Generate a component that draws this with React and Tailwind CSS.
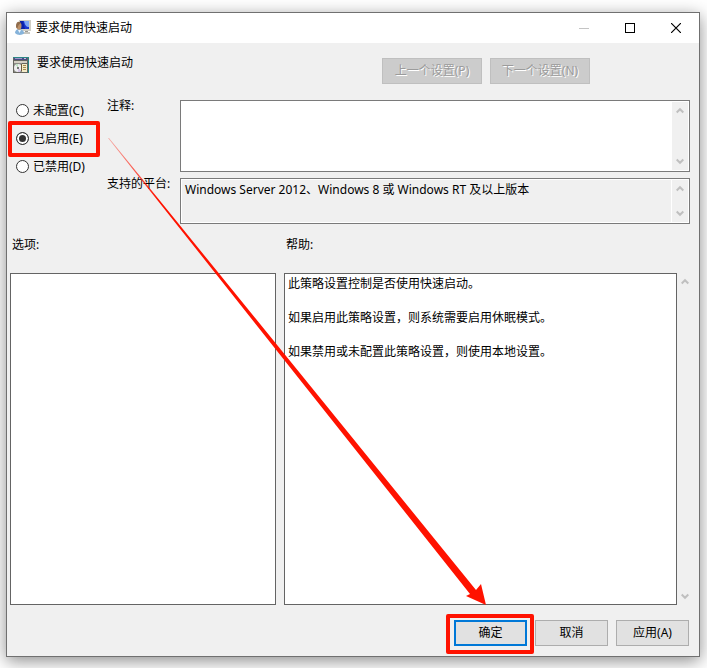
import React from "react";

const helpText = `此策略设置控制是否使用快速启动。

如果启用此策略设置，则系统需要启用休眠模式。

如果禁用或未配置此策略设置，则使用本地设置。`;

const states = [
  { id: "state-none", label: "未配置(C)" },
  { id: "state-on", label: "已启用(E)", marked: true },
  { id: "state-off", label: "已禁用(D)" },
];

function UserMonitorIcon() {
  return (
    <svg className="size-4 shrink-0" viewBox="0 0 16 16" aria-hidden="true">
      <rect x="4" y="0" width="12" height="11" fill="#cfcdc4" />
      <rect x="5" y="1" width="9" height="8" fill="#1a36cf" />
      <path d="M9 1h5v6c-3 0-4-2-5-6z" fill="#7ea6f4" />
      <path d="M5 1h3l2 8H5z" fill="#0a1fa8" />
      <rect x="10" y="11" width="3" height="1" fill="#9a9a94" />
      <rect x="8" y="12" width="7" height="2" fill="#c6c6c0" />
      <path d="M0 13c0-2 1.500-4 4-4s5 1.500 5 4.500c-2 2-7 2-9-.5z" fill="#86b3da" />
      <path d="M3 10l1.500 3L6 10z" fill="#eef5fb" />
      <ellipse cx="4" cy="6" rx="2.500" ry="3.700" fill="#bd9168" />
      <path d="M1 6c0-3 1.500-4.500 3-4.300 1.200.3 1.800 1 1.500 1.800C4 4 3 6 2.300 8.500 1.500 8.500 1 7.500 1 6z" fill="#8f6c4c" />
    </svg>
  );
}

function PolicyIcon() {
  return (
    <svg className="size-4 shrink-0" viewBox="0 0 16 16" shapeRendering="crispEdges" aria-hidden="true">
      <rect width="16" height="16" fill="#2b8585" />
      <rect x="0" y="1" width="15" height="15" fill="#66665f" />
      <rect x="1" y="1" width="13" height="2" fill="#4b4b86" />
      <rect x="2" y="1" width="7" height="1" fill="#9a9ac8" />
      <rect x="11" y="1" width="2" height="1" fill="#c9c9d8" />
      <rect x="1" y="4" width="13" height="2" fill="#d4d0c4" />
      <rect x="1" y="6" width="8" height="9" fill="#8c8c88" />
      <circle cx="5" cy="11" r="4" fill="#ededed" shapeRendering="auto" />
      <path d="M5 11L2 8a4 4 0 0 1 3-1z" fill="#bfe3c2" />
      <path d="M5 11l3 3a4 4 0 0 1-3 1z" fill="#d5c4e8" />
      <rect x="4" y="10" width="2" height="2" fill="#777777" />
      <rect x="9" y="7" width="5" height="8" fill="#f3ebc8" />
      <rect x="8" y="7" width="1" height="7" fill="#6e5c36" />
      <rect x="10" y="8" width="3" height="1" fill="#a68b4e" />
      <rect x="10" y="10" width="3" height="1" fill="#a68b4e" />
      <rect x="10" y="12" width="3" height="1" fill="#a68b4e" />
      <rect x="15" y="6" width="1" height="10" fill="#2b8585" />
    </svg>
  );
}

function Chevron({ down }) {
  return (
    <svg className="h-[7px] w-2" viewBox="0 0 8 7" fill="none" stroke="#bfbfbf" strokeWidth="2" aria-hidden="true">
      <path d={down ? "M0.700 1.500L4 4.800L7.300 1.500" : "M0.700 5.500L4 2.200L7.300 5.500"} />
    </svg>
  );
}

function ScrollBar() {
  return (
    <div className="flex w-4 shrink-0 flex-col justify-between bg-[#f0f0f0]">
      <button type="button" aria-label="向上滚动" className="flex h-[17px] items-center justify-center">
        <Chevron />
      </button>
      <button type="button" aria-label="向下滚动" className="flex h-[17px] items-center justify-center">
        <Chevron down />
      </button>
    </div>
  );
}

function RedFrame({ className }) {
  return <span className={`pointer-events-none absolute rounded-[2px] border-4 border-[#ff1200] ${className}`} />;
}

export default function App() {
  return (
    <div className="flex min-h-screen flex-col bg-white pt-3 pr-[7px] pb-[11px] pl-1.5 font-['Noto_Sans','Noto_Sans_CJK_SC',sans-serif] text-[12px] leading-4 text-black">
      <main className="relative flex flex-1 flex-col border border-[#707070] bg-[#f0f0f0] shadow-[0_4px_16px_rgba(0,0,0,0.45)]">
        <header className="flex h-[30px] items-center bg-white pl-2">
          <UserMonitorIcon />
          <h1 className="ml-[5px] flex-1">要求使用快速启动</h1>
          <button type="button" disabled aria-label="最小化" className="flex h-full w-[46px] items-center justify-center">
            <svg className="size-[10px]" viewBox="0 0 10 10" aria-hidden="true">
              <path d="M0 5.500H10" stroke="#c4c4c4" />
            </svg>
          </button>
          <button type="button" aria-label="最大化" className="flex h-full w-[46px] items-center justify-center">
            <svg className="size-[10px]" viewBox="0 0 10 10" fill="none" aria-hidden="true">
              <rect x="0.500" y="0.500" width="9" height="9" stroke="#000" />
            </svg>
          </button>
          <button type="button" aria-label="关闭" className="flex h-full w-[46px] items-center justify-center">
            <svg className="size-[10px]" viewBox="0 0 10 10" fill="none" aria-hidden="true">
              <path d="M0 0L10 10M10 0L0 10" stroke="#000" strokeWidth="1.200" />
            </svg>
          </button>
        </header>

        <div className="flex h-[54px] items-start pt-[14px] pr-[109px] pl-1.5">
          <PolicyIcon />
          <h2 className="-mt-0.5 ml-2 flex-1">要求使用快速启动</h2>
          <div className="flex gap-2 pt-px">
            <button type="button" disabled className="h-[26px] w-[100px] border border-[#bfbfbf] bg-[#cccccc] text-[#9b9b9b] [text-shadow:1px_1px_0_#fff]">
              上一个设置(P)
            </button>
            <button type="button" disabled className="h-[26px] w-[100px] border border-[#bfbfbf] bg-[#cccccc] text-[#9b9b9b] [text-shadow:1px_1px_0_#fff]">
              下一个设置(N)
            </button>
          </div>
        </div>

        <div className="flex px-[9px]">
          <fieldset className="w-[91px] shrink-0">
            {states.map((s) => (
              <div key={s.id} className="relative flex h-7 items-center gap-1">
                <input
                  type="radio"
                  id={s.id}
                  name="state"
                  defaultChecked={s.marked}
                  className="mb-px size-[13px] appearance-none rounded-full border border-[#333] bg-white checked:bg-[#333] checked:shadow-[inset_0_0_0_2px_#fff]"
                />
                <label htmlFor={s.id}>{s.label}</label>
                {s.marked && <RedFrame className="-top-1 right-[7px] -bottom-1 -left-2" />}
              </div>
            ))}
          </fieldset>
          <div className="grid flex-1 grid-cols-[73px_1fr] gap-y-1.5 pt-[3px]">
            <label htmlFor="comment" className="-mt-0.5">注释:</label>
            <div className="flex h-[72px] border border-[#7a7a7a] bg-white p-px">
              <textarea id="comment" className="min-w-0 flex-1 resize-none overflow-hidden bg-white px-[3px] outline-none" />
              <ScrollBar />
            </div>
            <label htmlFor="platform" className="-mt-0.5">支持的平台:</label>
            <div className="flex h-[46px] border border-[#7a7a7a] bg-white p-px">
              <textarea
                id="platform"
                readOnly
                defaultValue="Windows Server 2012、Windows 8 或 Windows RT 及以上版本"
                className="mr-px min-w-0 flex-1 resize-none overflow-hidden bg-[#f0f0f0] px-[3px] pt-0.5 outline-none"
              />
              <ScrollBar />
            </div>
          </div>
        </div>

        <div className="grid flex-1 grid-cols-[266fr_409fr] grid-rows-[auto_1fr] gap-x-2 pr-1.5 pl-[3px]">
          <label htmlFor="options" className="pt-[13px] pb-5 pl-0.5">选项:</label>
          <label htmlFor="help" className="pt-[13px] pb-5 pl-0.5">帮助:</label>
          <textarea id="options" readOnly className="resize-none border border-[#646464] bg-white outline-none" />
          <div className="flex">
            <textarea
              id="help"
              readOnly
              defaultValue={helpText}
              className="min-w-0 flex-1 resize-none overflow-hidden border border-[#646464] bg-white px-[3px] pt-px leading-[17px] outline-none"
            />
            <ScrollBar />
          </div>
        </div>

        <footer className="flex justify-end gap-2 pt-[15px] pr-[10px] pb-[10px]">
          <div className="relative">
            <button type="button" className="h-[26px] w-[73px] border-2 border-[#0078d7] bg-[#e1e1e1]">确定</button>
            <RedFrame className="-top-1.5 -right-[7px] -bottom-2 -left-2" />
          </div>
          <button type="button" className="h-[26px] w-[73px] border border-[#adadad] bg-[#e1e1e1]">取消</button>
          <button type="button" className="h-[26px] w-[73px] border border-[#adadad] bg-[#e1e1e1]">应用(A)</button>
        </footer>

        <svg className="pointer-events-none absolute top-[125px] left-[101px] h-[467px] w-[378px]" viewBox="0 0 378 467" aria-hidden="true">
          <defs>
            <linearGradient id="fade" gradientUnits="userSpaceOnUse" x1="0" y1="0" x2="50" y2="62">
              <stop offset="0" stopColor="#ff1200" stopOpacity="0.300" />
              <stop offset="1" stopColor="#ff1200" />
            </linearGradient>
          </defs>
          <path d="M0 0L1 0L368 452L373 446L378 467L358 458L362 456Z" fill="url(#fade)" />
        </svg>
      </main>
    </div>
  );
}
